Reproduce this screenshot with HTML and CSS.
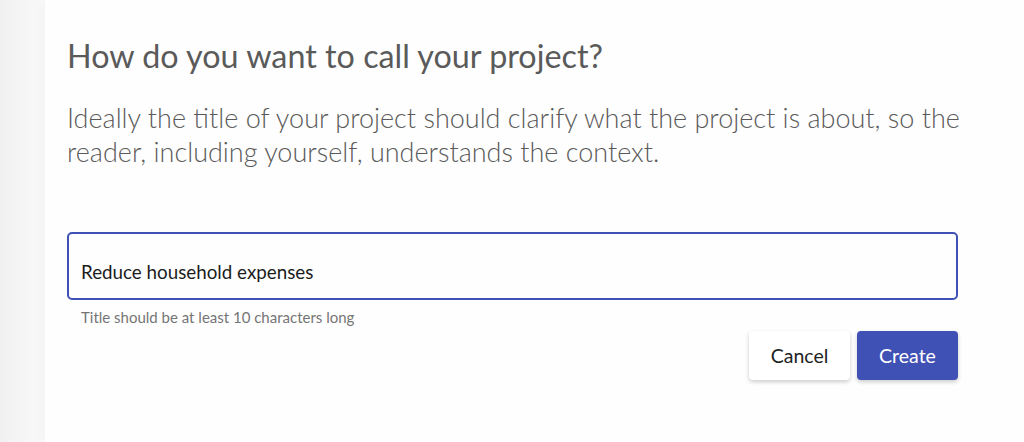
FILE: index.html
```html
<!DOCTYPE html>
<html lang="en">
	<head>
		<meta charset="UTF-8">
		<meta name="viewport" content="width=device-width, initial-scale=1.0">
		<title>New project</title>
		<link rel="stylesheet" href="styles.css">
	</head>
	<body>
		<div class="page">
			<div class="panel">
				<h1 class="titulo">How do you want to call your project?</h1>
				<p class="intro">Ideally the title of your project should clarify what the project is about, so the reader, including yourself, understands the context.</p>
				<form class="projectform">
					<div class="field">
						<input type="text" class="forminput" value="Reduce household expenses">
					</div>
					<p class="helper">Title should be at least 10 characters long</p>
					<div class="actions">
						<button type="button" class="btn cancel">Cancel</button>
						<button type="submit" class="btn create">Create</button>
					</div>
				</form>
			</div>
		</div>
	</body>
</html>
```
FILE: styles.css
```css
:root{
	--primary-color:#3f51b5;
	--text-color:#5a5a5a;
	--muted-color:#757575;
}
html, body{
	margin:0;
	height:100%;
}
body{
	background:linear-gradient(to right, #f0f0f0 0px, #f7f7f7 30px, #fafafa 45px);
	font-family:Lato, "Open Sans", sans-serif;
}
.page{
	height:100%;
	padding-left:45px;
}
.panel{
	height:100%;
	background-color:#fefefe;
	box-shadow:-4px 0 12px rgba(0,0,0,0.03);
	padding:36px 66px 0 22px;
	box-sizing:border-box;
}
.titulo{
	margin:0;
	font-size:32.3px;
	font-weight:400;
	line-height:40px;
	color:var(--text-color);
}
.intro{
	margin:25px -30px 0 0;
	max-width:900px;
	font-size:27px;
	font-weight:300;
	line-height:34px;
	color:var(--text-color);
}
.projectform{
	margin-top:63px;
}
.field{
	height:68px;
	border:2px solid var(--primary-color);
	border-radius:5px;
	box-sizing:border-box;
	display:flex;
	align-items:flex-end;
	padding:0 12px 15px;
}
.forminput{
	border:none;
	outline:none;
	width:100%;
	padding:0;
	font-family:inherit;
	font-size:18.8px;
	line-height:normal;
	color:#1c1c1c;
	background:transparent;
}
.helper{
	margin:8px 0 0 14px;
	font-size:15px;
	line-height:18px;
	color:var(--muted-color);
}
.actions{
	display:flex;
	justify-content:flex-end;
	gap:7px;
	margin-top:5px;
}
.btn{
	width:101px;
	height:49px;
	border:none;
	border-radius:4px;
	font-family:inherit;
	font-size:19.5px;
	box-shadow:0 2px 4px rgba(0,0,0,0.2);
	cursor:pointer;
}
.cancel{
	background-color:#ffffff;
	color:#222;
}
.create{
	background-color:var(--primary-color);
	color:#ffffff;
}
```
